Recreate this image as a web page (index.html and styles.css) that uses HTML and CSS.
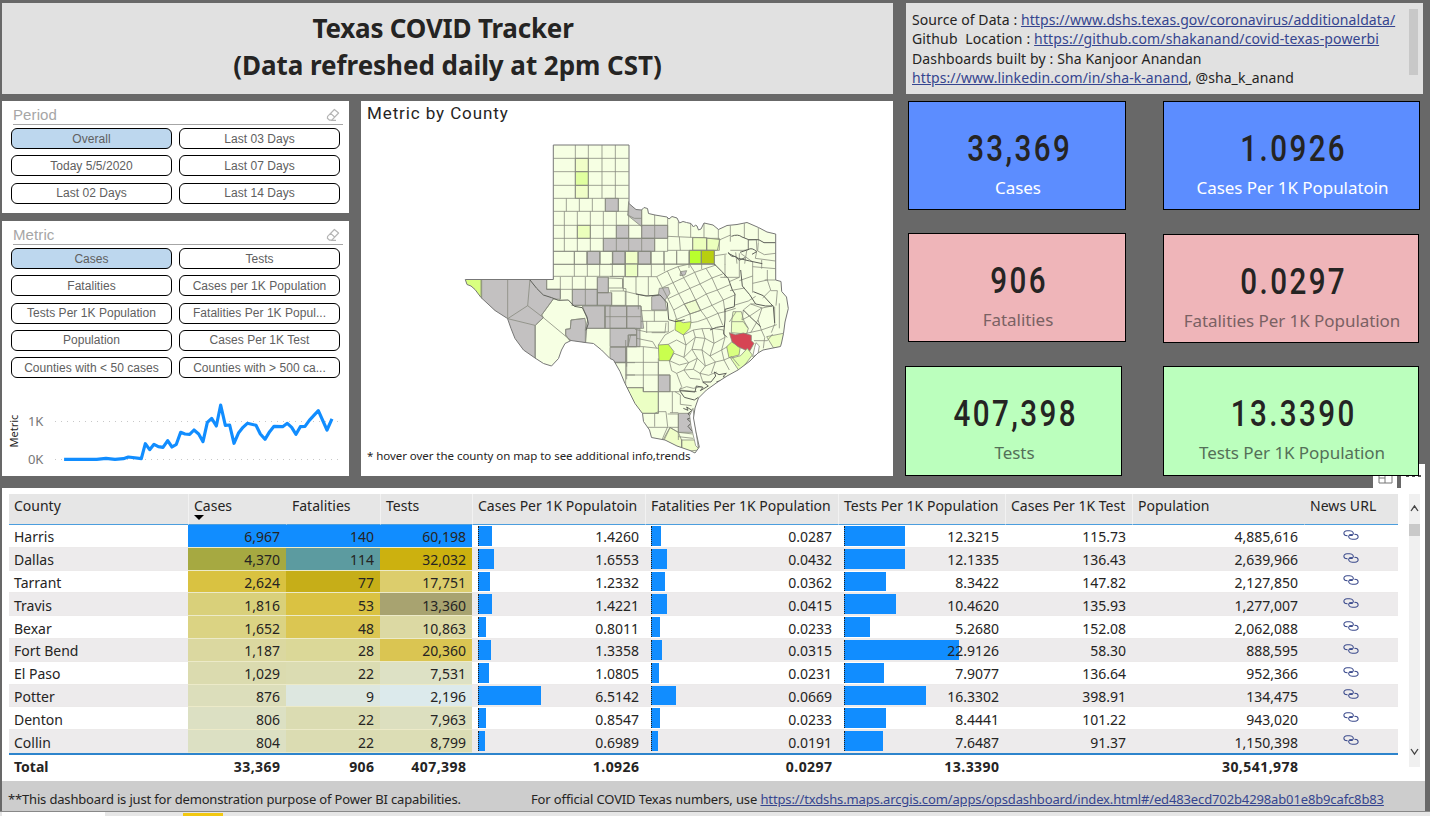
FILE: index.html
```html
<!DOCTYPE html>
<html lang="en">
<head>
<meta charset="utf-8">
<title>Texas COVID Tracker</title>
<link rel="stylesheet" href="styles.css">
</head>
<body>
<svg class="defs" width="0" height="0" aria-hidden="true">
  <symbol id="eraser" viewBox="0 0 14 14"><path d="M1.6 8.3 8.4 1.5 12.6 5 5.8 12.2H3.6L1.4 10.2zM4.6 5.4l4.3 3.8M5 12.4h5" fill="none" stroke="#b5b5b5" stroke-width="1.2" stroke-linejoin="round"/></symbol>
  <symbol id="link" viewBox="0 0 16 10"><path d="M4.200 5.800C-.2 5.800-.2.8 4 .8h2.600C9.800.8 11.400 3.200 9.600 4.800 8.600 5.700 7.200 5.600 6.400 4.800M11.800 4.200C16.200 4.200 16.200 9.200 12 9.200H9.400C6.200 9.200 4.600 6.800 6.400 5.200 7.400 4.300 8.800 4.400 9.600 5.200" fill="none" stroke="#3b4a8c" stroke-width="1.050" stroke-linecap="round"/></symbol>
</svg>
<div class="top">
  <div class="left">
    <header class="title"><span>Texas COVID Tracker</span><span class="sub">(Data refreshed daily at 2pm CST)</span></header>
    <div class="main">
      <div class="side">
        <section class="panel period">
          <div class="head"><span>Period</span><svg width="14" height="14"><use href="#eraser"/></svg></div>
          <div class="pills">
            <button class="on">Overall</button><button>Last 03 Days</button>
            <button>Today 5/5/2020</button><button>Last 07 Days</button>
            <button>Last 02 Days</button><button>Last 14 Days</button>
          </div>
        </section>
        <section class="panel metric">
          <div class="head"><span>Metric</span><svg width="14" height="14"><use href="#eraser"/></svg></div>
          <div class="pills">
            <button class="on">Cases</button><button>Tests</button>
            <button>Fatalities</button><button>Cases per 1K Population</button>
            <button>Tests Per 1K Population</button><button>Fatalities Per 1K Popul...</button>
            <button>Population</button><button>Cases Per 1K Test</button>
            <button>Counties with &lt; 50 cases</button><button>Counties with &gt; 500 ca...</button>
          </div>
          <svg class="trend" width="347" height="94" viewBox="2 382 347 94">
            <path d="M55 421.500H343M55 459.500H343" stroke="#c8c8c8" stroke-dasharray="1 5" fill="none"/>
            <text class="axis" x="28" y="426">1K</text><text class="axis" x="28" y="464">0K</text>
            <text class="ylab" transform="translate(18 447.500) rotate(-90)">Metric</text>
            <g transform="translate(0 215) scale(.33333)"><polyline fill="none" stroke="#118dff" stroke-width="9.500" stroke-linejoin="round" stroke-linecap="square" points="197,733 290,733 318,730 345,733 370,731 385,726 424,731 436,686 449,704 462,688 475,695 489,697 503,677 516,696 529,688 542,652 555,657 569,658 582,645 596,657 609,680 622,622 635,610 649,633 662,570 676,631 689,630 702,685 716,653 729,637 742,625 768,631 781,657 795,673 809,650 822,634 848,635 862,625 875,637 888,658 901,635 915,634 928,616 941,602 955,587 981,645 994,616"/></g>
          </svg>
        </section>
      </div>
      <section class="panel map">
        <h2>Metric by County</h2>
        <svg class="texas" width="532" height="340" viewBox="361 125 532 340">
          <defs><path id="tx" d="M553.300 145H629V203.500L633 207 636 209.500 641.500 210 644 207.500 647.500 208.500 648.500 213.500 655 215 661 216 667 217 669 219 672 216.500 677 218 679.500 223 683 221.500 686.500 222.500 691 223.500 693.500 227 695.500 225 697 226 698.500 230 701 229 704 223 713 225 718.500 229.500 727 225.500 737 224.500 747 222.500 758.500 227.500 767 232 775.700 234V280L781 281.500 781.700 291.500 786.500 297 788.300 308.500 785 322 783.500 333.500 781.500 343 780.500 346.500 763 350 758 353 750 361 738 370 727 376 717 382.500 706.500 390 698.500 398 695 408 693.500 418 696 432 699.300 447 695 453 690 450.500 677 446 665 440 651.500 437.500 649.500 430 643.500 421.500 642.500 413.500 635 403.500 630 393.500 625 383.500 620 371.500 613.500 360 610 358.500 601.500 350 593.500 343.500 585 342.500 571 340.500 565 343.500 561.500 350 558.500 358.500 551.500 366 543.500 363.500 535 358 523.500 350 515 338.500 511 328.500 507.500 318.500 495 310.500 481 297.500 475 289.500 471 286 467 284.500 465.300 279.500H553.300Z"/><clipPath id="clip"><use href="#tx"/></clipPath></defs>
          <use href="#tx" fill="#f6ffe3"/>
          <g clip-path="url(#clip)">
            <g transform="translate(540 135) scale(.33333)" class="cty">
              <g class="na"><path d="M196 190h39v39h-39zM266 200h39v75l-42-34zM229 271h37v39h-37zM305 271h78v39h-78zM190 310h154v39H190zM141 349h39v39h-39zM218 349h38v39h-38zM294 349h38v39h-38z"/></g>
              <path fill="#f0fec8" d="M106 70h39v40h-39zM106 151h39v39h-39zM256 349h38v39h-38z"/>
              <path fill="#e0ffa0" d="M106 110h39v41h-39z"/>
              <path fill="#ebffbc" d="M112 271h39v39h-39zM458 308h42v38h-42zM500 310h38v36h-38z"/>
              <path fill="#b9ff2e" d="M448 346h36v40h-36z"/><path fill="#b8cf10" d="M484 346h39v40h-39z"/>
              <path d="M106 30V190M145 30V190M186 30V190M226 30V190M40 70H266M40 110H266M40 151H266M40 190H266M79 190v39M118 190v39M157 190v39M196 190v39M235 190v39M40 229H266M73 229v120M112 229v120M151 229v120M190 229v120M229 229v120M266 205V349M305 222V349M344 240V349M383 246V349M40 271H383M40 310H383M40 349H383M103 349v39M141 349v39M180 349v39M218 349v39M256 349v39M294 349v39M332 349v39M371 349v39M40 388H525M263 240l20 10 22 0M383 304l70 3 39 1 48 6 32-14M415 260v44M452 262v45M492 262v46M535 280v33M571 272v48M613 265v44M655 278v42M418 305l3 41M458 307v39M500 310v36M540 313l-8 33M383 346H530M410 346v42M448 346v42M484 346v42M523 346v42M525 362l35-5M571 346l40 0 14-2V312M625 345v-30l24-1 2 34M655 322l-2 26 20 11 34-4M587 352l4 34M620 348l-6 38M555 388v-28M650 350l-4 20 60 8"/>
              <path stroke="#444" stroke-width="4" d="M574 304q20-8 32 2l20 8 30 0 16 9h35M565 352q8 16 22 12l10 12 18-8M600 352l24-8q12-8 26 6l-14 8"/>
            </g>
            <g transform="translate(455 250) scale(.33333)" class="cty">
              <path class="nf" d="M78 88H275V118H316V148L295 147 260 195 265 203 241 226V330L140 300 120 182 78 152zM382 168h68v67h-59l7-25zM352 118h75v48h-75zM427 82h33v46h-33zM427 128h43v38h-43zM450 168h105v67H450zM469 235h86v55h-86zM469 290h46v48h-46zM348 210l42-5 5 35-3 38-47-4-13-20v-16l14-2z"/>
              <path fill="#d9ff80" d="M25 88h55v60l-55-40z"/>
              <path d="M295 4H540M295 43H540M295 79H510M358 4v75M397 4v75M434 4v75M472 4v75M510 4v75M295 79v9M275 88v30h41v28M316 81v38M275 118H427M352 81v85M391 81v85M427 81v85M460 82v46H427M460 84l43 2v28l-43 0M503 86v29l10 1V166H350M470 128V166M78 88V152M158 88V206M225 88L218 167 158 206 240 226V330M218 167L265 203 348 272M295 147L260 195 265 203 241 226M450 168v67H391M450 200h90M450 235h90M513 166v69M469 235V320M469 290h46V350M520 290v-35l20-3M469 338h71M515 375h25M515 338v50M391 237v41M348 210l42-5M348 210l-2 26-14 2v20l16 14"/>
              <path stroke="#444" stroke-width="4.500" d="M225 90l20 25 20 20 25 8 20 8 30-1 18 19 24 4 14 28 4 20-7 20"/>
            </g>
            <g transform="translate(610 250) scale(.33333)" class="cty">
              <path class="nf" d="M148 115l27-3 5 18-15 20 5 30h-45v-40l20-5zM212 65l18-3-5 13-15 2zM0 168h50v67H0zM50 168h43l8 67H50zM0 235h80v20H62l-8 35H0zM56 255h24v35H54z"/>
              <path fill="#ecffc4" d="M365 215l4-30h25l8 28 13 22-5 17-46-4zM46 42h37v38H46zM470 260l60-12v45h-40z"/>
              <path fill="#effdcf" d="M223 162l34-12 15 31-32 11z"/>
              <path fill="#d4ff60" d="M197 208l23 10 23-3-3 20-20 20-25-15z"/><path fill="#c9ff4e" d="M145 285l30-2 17 22-12 27h-33z"/>
              <path fill="#d9ff80" d="M350 290l15-14 26 14-4 25-30 8z"/>
              <path d="M46 42v38M83 42v38M124 4v76M163 4v60M200 4v40M237 4v50M275 42v15M0 42H313M0 80H140M40 80v43M78 80v52M115 80v55M0 123H40L78 132 115 138 145 135M46 125v43M85 135V178M0 168H93V235M50 168v67M0 200h93M93 182h78M133 182v32M93 214h82v32H110L75 238M133 214M0 235H75M110 214v35M80 240v50H54v-35h26M80 265l48 10 12 20M125 248h40l3-30"/>
              <path d="M140 80L172 63 204 50 238 42M157 113L189 98 221 83 254 67 288 55 318 45M174 146L206 131 240 115 270 102 306 84 338 72M191 180L223 162 257 150 289 132 322 120 360 104M200 208L240 192 272 181 306 166 340 150 376 134M243 218L262 215 290 205 324 190 345 185M220 255L250 240 276 236 306 235 340 240M140 80L157 113 174 146 191 180 200 208M172 63L189 98 206 131 223 162 240 192 243 215M204 50L221 83 240 115 257 150 272 181 290 205 306 235M238 42L254 67 270 102 289 132 306 166 324 190 338 225M288 55L306 84 322 120 340 150 345 185M165 255L192 240M175 283L200 270 228 285 256 262 285 265 312 280 345 262M192 310L222 322 246 298 276 300 300 318 335 300 352 290M220 255L228 285 222 322M250 240L256 262 246 298M276 236L285 265 276 300M306 235L312 280 300 318M340 240L345 262 335 300M165 255L145 285"/>
              <path d="M345 42v40h-14M388 10v72l-28 12M345 82h43M388 92l40-14V36M428 78v50M428 100l44-10 10 30-24 24M464 90h33M472 60v30M428 50l69 6M455 30v26M392 10l36 26M482 122l20 0-4 45M360 122l44-8M375 165l40-12 22-14M400 180l22-18 14 0M400 180l-4 30M422 162l34 12-12 36-22 38M452 175l38-8M396 210l26-14 30-20M444 210l10 30 46-16M494 170v52l-10 26M508 160v75M400 252l54-12M454 240l10 22-4 33M432 272h40l16-20M365 215h35l14 20M345 185l32-10M358 216l20-30"/>
              <path stroke="#444" stroke-width="4" d="M313 42l22 22 20 22 12 34 8 12-2 38-28 8 0 32-4 42 10 10M355 10l30 15 34 8 38 8M392 60l5 48 22 26 18 28 30 6 20 0M430 125l30 12 22 24 8 8 4 50M400 180l20 20 32 30M78 132l30 6 42-3 22 24 4 50 22 6 26-6M300 240l20-8 25-4"/>
              <path fill="#d64554" stroke="#a03040" d="M358 248l18 6 24-5 24 7 0 16 8 8-12 22-14-2-22-10-18-15z"/>
              <path fill="#fff" d="M434 292l4-14 10 10-4 24-16 8z"/>
            </g>
            <g transform="translate(610 340) scale(.33333)" class="cty">
              <path class="nf" d="M0 22h47v45H0zM145 105h35v50h-35zM205 220h38l6 57h-44z"/>
              <path fill="#ebffc4" d="M40 143h60v12h45v65H95L60 180z"/><path fill="#effdc8" d="M180 262l25 15 10 24v34l-60-28zM215 300l40 0 16 30-56 5z"/><path fill="#e4ffb0" d="M362 55l30-8 20-22 15 20-38 50z"/>
              <path d="M47 0v143M100 20v135M145 55V220M47 20h53l45 5M0 67H145M47 105h98M40 143h60v12h108M180 105h-35M180 105v50M97 220h48M187 155v63M134 220v40M102 262h72M134 220l12-5h22l5 45-18 42M173 222l32 0v55l43 5M205 262h-30M160 305l20-42 25 14v23M215 298l0 28M205 290l44 5M180 218h25M195 155l16 10 0 28 34 4M208 150l52 5M145 67L145 105"/>
              <path d="M178 62L208 75 236 68 262 55 286 78 316 66 342 60 365 50M185 92L200 100 222 90 250 88 270 100 296 106 320 96M192 40L178 62 185 92M222 52L236 68 222 90 240 115 270 118M246 28L262 55 250 88M276 30L286 78 270 100 280 130M300 48L316 66 304 100M335 30L342 60 358 90M365 50L388 78M200 100L215 140 208 150M208 148L230 140 250 145 275 140"/>
              <path stroke="#555" stroke-width="3.500" d="M265 172l-12 8-30-8-14-20 46 4 4-18 20 4-8 10 24-14-16-12 24 0 14-18-4-12 14 8 22-4-10 10 14 4-34 12M220 205l14 6-4-10 16 10-12 10 10 12-12 4 12 12-10 10 12 14"/>
              <path fill="#fff" stroke="#777" d="M249 205l8 60 8 60-8-8-14-60-4-30z"/>
            </g>
          </g>
          <use href="#tx" fill="none" stroke="#777" stroke-width="1"/>
        </svg>
        <p class="hint">* hover over the county on map to see additional info,trends</p>
      </section>
    </div>
  </div>
  <div class="right">
    <section class="info">
      <div class="info-text">
        <p class="l1">Source of Data : <a>https://www.dshs.texas.gov/coronavirus/additionaldata/</a></p>
        <p class="l2">Github&nbsp; Location : <a>https://github.com/shakanand/covid-texas-powerbi</a></p>
        <p class="l3">Dashboards built by : Sha Kanjoor Anandan</p>
        <p class="l4"><a>https://www.linkedin.com/in/sha-k-anand</a>, @sha_k_anand</p>
      </div>
      <i class="thumb"></i>
    </section>
    <div class="cards">
      <div class="card blue a1"><b>33,369</b><span>Cases</span></div>
      <div class="card blue b1"><b>1.0926</b><span>Cases Per 1K Populatoin</span></div>
      <div class="card pink a2"><b>906</b><span>Fatalities</span></div>
      <div class="card pink b2"><b>0.0297</b><span>Fatalities Per 1K Population</span></div>
      <div class="card green a3"><b>407,398</b><span>Tests</span></div>
      <div class="card green b3"><b>13.3390</b><span>Tests Per 1K Population</span></div>
      <svg class="tools" width="52" height="24" viewBox="0 0 52 24"><path fill="#fff" d="M0 0h24v24H0zM28 0h24v24H28z"/><path d="M6 8v11h13v-9M6 14h6v5M12 14v-3h7" fill="none" stroke="#777"/><path d="M33 11h3v2h-3zM39 11h3v2h-3zM45 11h3v2h-3z" fill="#555"/></svg>
    </div>
  </div>
</div>
<section class="grid">
  <table>
    <colgroup><col class="c0"><col class="c1"><col class="c2"><col class="c3"><col class="c4"><col class="c5"><col class="c6"><col class="c7"><col class="c8"><col class="c9"></colgroup>
    <thead><tr><th>County</th><th class="sorted">Cases</th><th>Fatalities</th><th>Tests</th><th>Cases Per 1K Populatoin</th><th>Fatalities Per 1K Population</th><th>Tests Per 1K Population</th><th>Cases Per 1K Test</th><th>Population</th><th>News URL</th></tr></thead>
    <tbody id="rows"></tbody>
    <tfoot><tr><td>Total</td><td>33,369</td><td>906</td><td>407,398</td><td>1.0926</td><td>0.0297</td><td>13.3390</td><td></td><td>30,541,978</td><td></td></tr></tfoot>
  </table>
  <div class="scroll"><svg width="11" height="273" viewBox="0 0 11 273"><path d="M0 0h11v273H0z" fill="#f0f0f0"/><path d="M0 30h11v12H0z" fill="#c9c9c9"/><path d="M2 17l3.500-5 3.500 5M2 255l3.500 5 3.500-5" fill="none" stroke="#444" stroke-width="1.300"/></svg></div>
</section>
<footer class="foot"><span class="f1">**This dashboard is just for demonstration purpose of Power BI capabilities.</span><span class="f2">For official COVID Texas numbers, use <a>https://txdshs.maps.arcgis.com/apps/opsdashboard/index.html#/ed483ecd702b4298ab01e8b9cafc8b83</a></span></footer>
<div class="tabs"><i class="t1"></i><i class="t2"></i></div>
<script src="app.js"></script>
</body>
</html>
```
FILE: styles.css
```css
* { box-sizing: border-box; }
body { margin: 0; width: 1430px; height: 816px; overflow: hidden; background: #686868; color: #252423; font-family: "Noto Sans", "Open Sans", sans-serif; font-size: 14px; }
p, h2 { margin: 0; font-weight: 400; }
a { color: #35458f; text-decoration: underline; text-underline-offset: 1px; }
.defs { display: block; height: 0; }
.top { display: flex; gap: 12px; padding: 3px 0 0 2px; height: 488px; }
.left { width: 891px; display: flex; flex-direction: column; gap: 7px; }
.title { height: 91px; background: #e1e1e1; display: flex; flex-direction: column; align-items: center; padding-top: 7px; font-size: 26px; font-weight: 700; line-height: 37px; white-space: pre; }
.title span { margin-right: 9px; letter-spacing: -.2px; }
.title .sub { margin-right: 0; letter-spacing: -.050px; }
.main { display: flex; gap: 12px; }
.side { width: 347px; display: flex; flex-direction: column; gap: 8px; }
.panel { background: #fff; }
.period { height: 112px; }
.metric { height: 255px; }
.head { display: flex; justify-content: space-between; align-items: center; margin: 0 6px 0 11px; padding: 4px 3px 0 0; height: 24px; border-bottom: 1px solid #a6a6a6; font: 15px "Liberation Sans", Arial, sans-serif; color: #a6a6a6; letter-spacing: .1px; }
.pills { display: grid; grid-template-columns: 161px 161px; grid-auto-rows: 21px; gap: 6.300px 7px; padding: 3px 0 0 9px; }
.pills button { border: 1px solid #000; border-radius: 6px; background: #fff; padding: 0; color: #606060; font: 12px/18px "Liberation Sans", Arial, sans-serif; letter-spacing: .04px; white-space: nowrap; }
.pills .on { background: #bdd7ee; }
.trend { display: block; margin-top: 4px; }
.axis { font-size: 13px; fill: #777; letter-spacing: -.3px; }
.ylab { font-size: 11px; fill: #252423; }
.map { width: 532px; height: 375px; }
.map h2 { font: 17px/24px Roboto, sans-serif; letter-spacing: .9px; padding-left: 6px; height: 24px; }
.texas { display: block; }
.hint { font-size: 11.500px; letter-spacing: -.050px; line-height: 16px; padding-left: 6px; margin-top: -17px; position: relative; }
.cty path { stroke: #85887c; stroke-width: 2.300; stroke-linejoin: round; }
.cty path[stroke="#444"], .cty path[stroke="#555"] { stroke: #5c5e58; stroke-width: 3; }
.cty path:not([fill]) { fill: none; }
.cty .na path, .cty path.nf { fill: #c3c1c1; }
.right { width: 525px; display: flex; flex-direction: column; gap: 7px; padding-left: 1px; }
.info { width: 517px; height: 91px; background: #e1e1e1; display: flex; justify-content: space-between; padding: 6px 5px 0 6px; }
.info p { height: 19.300px; line-height: 21px; white-space: nowrap; letter-spacing: .085px; }
.info .l2 { letter-spacing: .15px; }
.info .l3 { letter-spacing: .120px; }
.thumb { width: 9px; height: 66px; background: #c8c8c8; }
.cards { display: grid; grid-template-columns: 257px 257px; grid-template-rows: 132px 133px 110px; position: relative; }
.card { position: relative; z-index: 1; border: 1px solid #000; height: 109px; display: flex; flex-direction: column; align-items: center; }
.card b { font: 500 37px/42px Roboto, sans-serif; letter-spacing: 3px; margin-right: -5px; transform: scaleX(.8); margin-top: 26px; height: 44px; }
.card span { font-size: 17px; letter-spacing: -.060px; line-height: 32px; color: #605e5c; white-space: nowrap; padding-left: 2px; }
.blue { background: #5c8dff; } .card.blue span { color: #fff; }
.pink { background: #efb5b9; } .green { background: #bbffbd; }
.card.green span { color: #547058; } .card.pink span { color: #7a6163; }
.a1, .a2 { width: 218px; margin-left: 2px; }
.a3 { width: 217px; margin-left: -1px; }
.a3, .b3 { height: 110px; }
.b1 { width: 257px; } .b2, .b3 { width: 256px; }
.b2 { margin-top: 1px; }
.tools { position: absolute; left: 467px; top: 363px; }
.grid { margin-left: 2px; width: 1423px; height: 293px; background: #fff; padding: 6px 5px 0 7px; display: flex; justify-content: space-between; }
table { width: 1389px; table-layout: fixed; border-collapse: separate; border-spacing: 0; height: 285px; }
.c0 { width: 179px; } .c1 { width: 98px; } .c2 { width: 94px; } .c3 { width: 92px; } .c4 { width: 173px; }
.c5 { width: 193px; } .c6 { width: 167px; } .c7 { width: 127px; } .c8 { width: 172px; } .c9 { width: 94px; }
th { height: 31px; padding: 0 0 7px 5px; background: #e6e6e6; border-bottom: 1px solid #4b9ede; text-align: left; font-weight: 400; line-height: 20px; white-space: nowrap; position: relative; }
th:nth-child(n+2) { border-left: 1px solid #f2f2f2; }
th:nth-child(3), th:nth-child(10) { border-left-color: #e6e6e6; }
th:last-child { padding-left: 5px; letter-spacing: .050px; }
.sorted::after { content: ""; position: absolute; left: 5px; top: 21px; border: 5px solid transparent; border-top-color: #000; border-bottom: 0; }
td { height: 22.800px; padding: 0 6px; line-height: 19px; text-align: right; position: relative; white-space: nowrap; }
td:first-child { text-align: left; padding-left: 5px; }
tbody td { border-bottom: 1px solid #eceaea; padding-top: 2px; }
tbody tr:nth-child(even) td { background: #edebec; }
tbody td.heat { border-bottom-color: #eceac8; }
tbody td:last-child { padding: 0 0 4px; }
td svg { display: block; margin: 2px auto 0; }
.bar { position: absolute; left: 6px; top: 1px; bottom: 1px; background: #118dff; border-left: 1px dotted #222; }
.num { position: relative; }
tfoot td { font-weight: 700; border-top: 2px solid #2d84cc; height: 27px; padding-bottom: 2px; }
tfoot td:nth-child(n+2) { letter-spacing: .450px; padding-right: 5.500px; }
.scroll { width: 11px; }
.scroll svg { display: block; }
.foot { height: 30px; width: 1425px; background: #cdcdcd; padding: 8px 0 0 6px; display: flex; font-size: 13px; line-height: 20px; white-space: nowrap; border-left: 2px solid #686868; }
.f1 { width: 523px; letter-spacing: -.165px; }
.f2 { letter-spacing: -.130px; }
.tabs { height: 5px; background: #e6e6e6; border-top: 1px solid #888; display: flex; padding-left: 2px; }
.t1 { width: 103px; background: #fff; } .t2 { width: 40px; margin: 1px 0 0 78px; background: #f2c811; }
```
FILE: app.js
```js
// name, cases, fatalities, tests, three per-1K rates, cases per 1K tests, population
const rows = [
  ["Harris", "6,967", "140", "60,198", "1.4260", "0.0287", "12.3215", "115.73", "4,885,616"],
  ["Dallas", "4,370", "114", "32,032", "1.6553", "0.0432", "12.1335", "136.43", "2,639,966"],
  ["Tarrant", "2,624", "77", "17,751", "1.2332", "0.0362", "8.3422", "147.82", "2,127,850"],
  ["Travis", "1,816", "53", "13,360", "1.4221", "0.0415", "10.4620", "135.93", "1,277,007"],
  ["Bexar", "1,652", "48", "10,863", "0.8011", "0.0233", "5.2680", "152.08", "2,062,088"],
  ["Fort Bend", "1,187", "28", "20,360", "1.3358", "0.0315", "22.9126", "58.30", "888,595"],
  ["El Paso", "1,029", "22", "7,531", "1.0805", "0.0231", "7.9077", "136.64", "952,366"],
  ["Potter", "876", "9", "2,196", "6.5142", "0.0669", "16.3302", "398.91", "134,475"],
  ["Denton", "806", "22", "7,963", "0.8547", "0.0233", "8.4441", "101.22", "943,020"],
  ["Collin", "804", "22", "8,799", "0.6989", "0.0191", "7.6487", "91.37", "1,150,398"]
];
const heat = [
  ["#118dff", "#118dff", "#118dff"],
  ["#a6a941", "#5c9ba0", "#ccb10f"],
  ["#d9c241", "#c6ae18", "#dccd6c"],
  ["#d9d07a", "#dac242", "#a8a370"],
  ["#dbd383", "#dbc652", "#dcd9a3"],
  ["#dbd8a0", "#dbd898", "#dac552"],
  ["#dbdbaf", "#dbdcb2", "#dde1c5"],
  ["#dcdebb", "#dde7e0", "#dceaec"],
  ["#dce0c3", "#dbdcb2", "#dcdfbf"],
  ["#dce0c3", "#dbdcb2", "#dcddb5"]
];
const bars = [
  [14, 10, 61], [16, 16, 61], [12, 13.5, 42], [14, 16, 52], [8, 9, 26],
  [13, 11, 115], [10.5, 8, 40], [63, 25, 82], [8, 9, 42], [7, 7, 39]
];
document.getElementById("rows").innerHTML = rows.map((r, i) =>
  "<tr>" + r.map((v, c) => {
    if (c >= 1 && c <= 3) return `<td class="heat" style="background:${heat[i][c - 1]}">${v}</td>`;
    if (c >= 4 && c <= 6) return `<td><i class="bar" style="width:${bars[i][c - 4]}px"></i><span class="num">${v}</span></td>`;
    return `<td>${v}</td>`;
  }).join("") + '<td><svg width="16" height="10"><use href="#link"/></svg></td></tr>'
).join("");
```
